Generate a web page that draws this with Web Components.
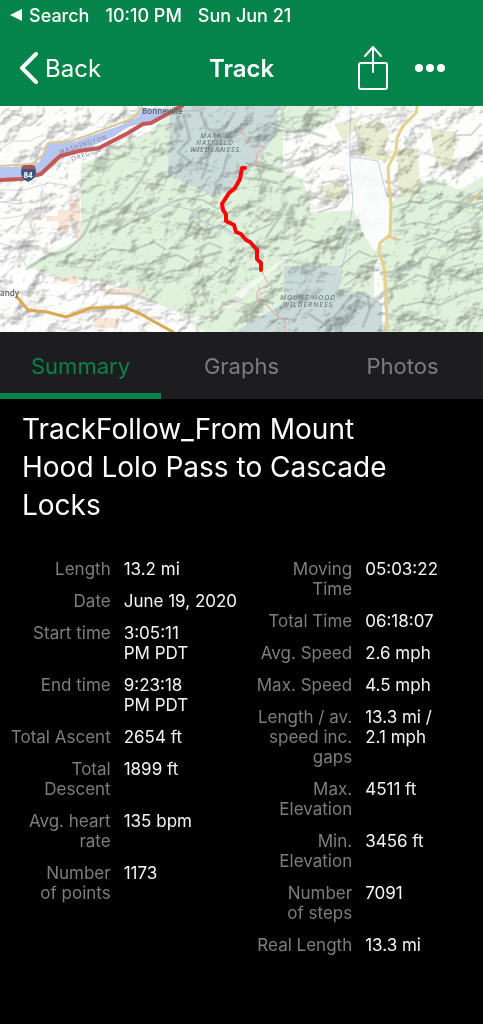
<!DOCTYPE html>
<html lang="en">
<head>
<meta charset="utf-8">
<meta name="viewport" content="width=device-width, initial-scale=1">
<title>Track</title>
<style>
  html { background: #000; }
  body { margin: 0; font-family: Inter, "Liberation Sans", sans-serif; color: #fff; --green: #04834a; }
</style>
</head>
<body>
<track-page>
  <status-bar slot="top"><a href="#search" slot="back">Search</a><span>10:10 PM</span><span>Sun Jun 21</span></status-bar>
  <nav-bar slot="top">Track</nav-bar>
  <track-map slot="top"></track-map>
  <tab-bar slot="top"></tab-bar>
  <track-title>TrackFollow_From Mount Hood Lolo Pass to Cascade Locks</track-title>
  <stat-grid>
    <stat-column>
      <stat-item label="Length">13.2 mi</stat-item>
      <stat-item label="Date">June 19, 2020</stat-item>
      <stat-item label="Start time">3:05:11 PM&nbsp;PDT</stat-item>
      <stat-item label="End time">9:23:18 PM&nbsp;PDT</stat-item>
      <stat-item label="Total Ascent">2654 ft</stat-item>
      <stat-item label="Total Descent">1899 ft</stat-item>
      <stat-item label="Avg. heart rate">135 bpm</stat-item>
      <stat-item label="Number of&nbsp;points">1173</stat-item>
    </stat-column>
    <stat-column>
      <stat-item label="Moving Time">05:03:22</stat-item>
      <stat-item label="Total Time">06:18:07</stat-item>
      <stat-item label="Avg. Speed">2.6 mph</stat-item>
      <stat-item label="Max. Speed">4.5 mph</stat-item>
      <stat-item label="Length / av. speed inc. gaps">13.3 mi / 2.1&nbsp;mph</stat-item>
      <stat-item label="Max. Elevation">4511 ft</stat-item>
      <stat-item label="Min. Elevation">3456 ft</stat-item>
      <stat-item label="Number of&nbsp;steps">7091</stat-item>
      <stat-item label="Real Length">13.3 mi</stat-item>
    </stat-column>
  </stat-grid>
</track-page>

<script>
const define = (name, html, setup) => customElements.define(name, class extends HTMLElement {
  constructor() {
    super();
    this.attachShadow({ mode: 'open' }).innerHTML = html;
  }
  connectedCallback() { if (setup) setup(this, this.shadowRoot); }
});

define('track-page', `
  <style>
    :host { display: flex; flex-direction: column; min-height: 100vh; background: #000; }
  </style>
  <header><slot name="top"></slot></header>
  <main><slot></slot></main>`);

define('status-bar', `
  <style>
    :host { display: flex; align-items: center; gap: 16px; height: 30px; padding: 0 10px; background: var(--green); font-size: 18px; font-weight: 500; white-space: nowrap; }
    .back { display: flex; align-items: center; gap: 7px; }
    ::slotted(a) { color: inherit; text-decoration: none; }
    svg { display: block; }
  </style>
  <div class="back">
    <svg width="12" height="12" viewBox="0 0 12 12" aria-hidden="true"><path d="M0 6 12 0V12Z" fill="#fff"/></svg>
    <slot name="back"></slot>
  </div>
  <slot></slot>`);

define('nav-bar', `
  <style>
    :host { display: grid; grid-template-columns: 1fr auto 1fr; align-items: center; height: 76px; padding: 0 38px 0 19px; box-sizing: border-box; background: var(--green); }
    button { display: flex; align-items: center; gap: 7px; padding: 0; border: 0; background: none; color: #fff; font: inherit; font-size: 24px; cursor: pointer; }
    h1 { margin: 0; padding-left: 19px; font-size: 24px; font-weight: 600; }
    .actions { display: flex; align-items: center; justify-content: flex-end; gap: 27px; }
    svg { display: block; fill: none; stroke: #fff; stroke-linecap: round; stroke-linejoin: round; }
  </style>
  <button type="button">
    <svg width="19" height="32" viewBox="0 0 19 32" stroke-width="4"><path d="M17 2 3 16 17 30"/></svg>Back
  </button>
  <h1><slot></slot></h1>
  <div class="actions">
    <button type="button" aria-label="Share">
      <svg width="30" height="46" viewBox="0 0 30 46" stroke-width="2"><rect x="1" y="18" width="28" height="26" rx="2"/><path d="M15 27V2M7 11 15 2 23 11"/></svg>
    </button>
    <button type="button" aria-label="More">
      <svg width="30" height="8" viewBox="0 0 30 8"><g fill="#fff" stroke="none"><circle cx="4" cy="4" r="4"/><circle cx="15" cy="4" r="4"/><circle cx="26" cy="4" r="4"/></g></svg>
    </button>
  </div>`);

define('track-map', `
  <style>
    :host { display: block; background: #f8f9f7; }
    svg { display: block; width: 100%; height: auto; }
    text { font-family: "Noto Sans", sans-serif; }
  </style>
  <svg viewBox="0 0 483 226" role="img" aria-label="Track map">
    <defs>
      <filter id="relief" x="0" y="0" width="100%" height="100%" color-interpolation-filters="sRGB">
        <feTurbulence type="fractalNoise" baseFrequency=".03 .036" numOctaves="4" seed="7" result="n"/>
        <feColorMatrix in="n" values="0 0 0 0 0  0 0 0 0 0  0 0 0 0 0  1 0 0 0 0"/>
        <feDiffuseLighting surfaceScale="11" diffuseConstant="1.3" lighting-color="#fff"><feDistantLight azimuth="225" elevation="52"/></feDiffuseLighting>
      </filter>
    </defs>
    <rect width="483" height="226" fill="#fdfdfc"/>
    <g fill="#e0f1dc">
      <path d="M81 58 100 51 120 40 150 25 178 0H270L283 18V64L300 72 310 90V105L325 106 354 104 362 125 374 140 386 138 374 160 374 226H205L178 207 144 192 120 177 60 172 25 160 45 150 81 132Z"/>
      <path d="M392 95 420 80 432 72 460 84 483 70V226H387L380 150 390 120Z"/>
      <path d="M270 0H345L322 22 300 27 265 28Z"/>
    </g>
    <g fill="#e9edd2"><path d="M358 20 378 12 390 25 384 44 394 52 380 56 358 48Z"/><path d="M398 43 418 42 420 88 405 95 397 78ZM430 22 456 26 452 66 436 58ZM334 18 362 10 345 38Z"/><path d="M320 81 343 74 346 90 330 96Z"/></g>
    <g fill="#cbdbd9"><path d="M170 5 177 0H276L279 25 260 50 237 80 214 91 200 84 182 75 168 70Z"/><path d="M284 160H340L338 184 365 188 382 197V226H235L284 197Z"/></g>
    <g fill="#f7dfcf" opacity=".75"><path d="M58 104H69V93H80V115H69V126H58V115H46V110H58ZM36 109H41V114H36ZM76 115H81V133H76ZM54 171H78V178H54ZM100 183H145V188H100ZM94 212H118V222H94Z"/></g>
    <path d="M0 155 25 165 100 185 172 204 200 210 230 202 300 140 240 185 208 215 172 218 140 200 95 198 45 187 0 172Z" fill="#fff" opacity=".6"/>
    <rect width="483" height="226" filter="url(#relief)" opacity=".34" style="mix-blend-mode:multiply"/>
    <path d="M343 52 382 54 388 100 388 130 374 145 362 125 354 90Z" fill="#fbfcfc" opacity=".9"/>
    <g fill="none" stroke="#68766e" stroke-linecap="round" stroke-linejoin="round" opacity=".26">
      <g stroke-width="3">
        <path d="M27 163 47 150 66 145 83 130 92 112 119 101 132 87 146 66"/>
        <path d="M184 10 190 33 178 46 190 56M201 8 207 22 220 30M210 40 206 62 202 72M228 48 222 70 215 78M234 7 226 21 214 28"/>
        <path d="M284 62 299 59 318 52 340 39M286 26 305 24 325 31M245 72 263 74 278 77M267 130 279 112 287 97"/>
        <path d="M310 209 324 218 337 208 351 190M242 202 260 194 273 197M363 220 370 203 368 190"/>
        <path d="M430 103 446 95 459 97 470 88M106 187 132 188 156 197M189 161 202 151 221 146"/>
      </g>
      <g stroke-width="2">
        <path d="M95 151 112 143 130 145 154 136 165 143M113 126 132 116 151 109 169 97 185 92 203 94 218 103 231 96"/>
        <path d="M62 160 80 153 94 155M130 161 151 157 177 149 189 155M150 175 170 165 187 164 203 155"/>
        <path d="M186 128 193 115 205 125 220 119 234 128M195 144 209 137 222 142M207 175 223 161 231 165"/>
        <path d="M246 57 263 61 282 66M250 28 269 17 284 21M249 128 271 118 284 99M294 139 307 134 324 138 342 131"/>
        <path d="M280 150 301 147 319 139M319 106 336 101 348 87M340 161 359 145 370 150M345 179 365 166 379 164"/>
        <path d="M400 179 418 169 434 174 452 161 473 156M410 161 428 151 443 155 463 144 482 142M398 201 420 196 440 199 463 188 482 183M414 139 433 132 447 137 463 128 480 125"/>
        <path d="M392 102 410 96 427 97 441 88M401 120 420 116 434 119 452 112 465 101 482 96M452 73 465 64 470 52 482 44M440 40 456 29 471 29 481 18"/>
        <path d="M266 222 279 212 294 214 302 202M318 224 333 212 346 215 355 204M402 216 425 211 443 216M456 219 473 208 482 209"/>
      </g>
      <path d="M8 24 20 18 31 20 42 10M0 43 13 35 29 35 45 28M66 28 80 18 93 20 106 7M0 17 13 8 23 11M0 84 24 84 49 77 67 79M2 96 19 98 36 95M0 113 20 110 32 105M22 134 34 130 43 126"/>
    </g>
    <g fill="none" stroke="#abc4df" opacity=".75"><path d="M483 110 454 121 435 138 418 160 389 168M351 0 350 30 350 59 353 96 346 145 337 184M354 51 378 55 386 88M143 110 159 101 172 99 191 104 199 114 224 124 243 137M0 137 17 143 26 160M483 82 469 89M0 96 21 94"/></g>
    <path d="M0 61 27 61 38 58 48 38 77 35 124 18 138 12 142 2 177 3 151 15 128 21 113 31 87 42 66 48 48 63 38 70 0 72Z" fill="#b7c6f1"/>
    <g fill="none" stroke-linejoin="round" stroke-linecap="round">
      <path d="M0 60 32 58 43 49 48 37 71 35 94 27 134 12 142 1" stroke="#d7c997" stroke-width="2"/>
      <path d="M-2 74 21 73 41 68 60 50 79 45 99 42 128 27 143 18 151 17 182 0" stroke="#c55855" stroke-width="4"/>
      <path d="M17 191 28 204 47 206 66 211 78 207 90 202 124 201 141 208 153 215 173 226" stroke="#d9aa53" stroke-width="3"/>
      <path d="M417 1 416 7 403 20 397 32 396 46 388 61 389 78 391 100 390 129 380 137 379 146 384 160 386 184 387 226" stroke="#e4d18c" stroke-width="3"/>
      <path d="M390 131 399 134M470 96 483 84" stroke="#e1bf91" stroke-width="2"/>
      <path d="M240 22 248 35 254 40 265 41 256 48 257 57 245 61M262 166 269 179 258 184 256 192 268 200 275 209 285 214 285 226" stroke="#eaa4a1"/>
      <path d="M245 62 242 62 240 73 235 82 229 87 222 98 223 104 226 108 226 115 234 119 236 126 241 128 246 134 250 136 257 144 257 153 261 157 261 164" stroke="#fb0509" stroke-width="4"/>
    </g>
    <g><path d="M22 60Q28 58 35 60L36 66Q36 73 28 76Q21 73 21 66Z" fill="#375682"/><path d="M22 60Q28 58 35 60V63H22Z" fill="#b25355"/><text x="28" y="72" fill="#fff" font-size="8" font-weight="700" text-anchor="middle">84</text></g>
    <g fill="#7b8289" font-size="6" letter-spacing="1"><text transform="translate(60 48) rotate(-18)">WASHINGTON</text><text transform="translate(72 55) rotate(-18)">OREGON</text></g>
    <g fill="#66696a" font-size="8" font-weight="600"><text x="142" y="8">Bonneville</text><text x="0" y="190">andy</text></g>
    <g fill="#71817f" font-size="7" font-style="italic" font-weight="500" letter-spacing="1" text-anchor="middle"><text x="217" y="32">MARK O.</text><text x="215" y="39">HATFIELD</text><text x="215" y="46">WILDERNESS</text><text x="308" y="194">MOUNT HOOD</text><text x="308" y="201">WILDERNESS</text></g>
  </svg>`);

define('tab-bar', `
  <style>
    :host { display: block; background: #1d1d1f; }
    div { display: grid; grid-template-columns: repeat(3, 1fr); }
    button { height: 67px; padding: 6px 0 0; border: 0; border-bottom: 6px solid transparent; background: none; color: #7d7d80; font: inherit; font-size: 22px; cursor: pointer; }
    button[aria-selected="true"] { color: var(--green); border-color: var(--green); }
  </style>
  <div role="tablist">
    <button type="button" role="tab" aria-selected="true">Summary</button>
    <button type="button" role="tab" aria-selected="false">Graphs</button>
    <button type="button" role="tab" aria-selected="false">Photos</button>
  </div>`, (host, root) => {
  const tabs = root.querySelectorAll('button');
  tabs.forEach(tab => tab.onclick = () => tabs.forEach(t => t.setAttribute('aria-selected', t === tab)));
});

define('track-title', `
  <style>
    :host { display: block; padding: 11px 80px 0 22px; }
    h2 { margin: 0; font-size: 28px; line-height: 38px; font-weight: 400; }
  </style>
  <h2><slot></slot></h2>`);

define('stat-grid', `
  <style>
    :host { display: grid; grid-template-columns: 1fr 1fr; padding: 35px 0; }
  </style>
  <slot></slot>`);

define('stat-column', `
  <style>
    :host { display: flex; flex-direction: column; gap: 12px; }
  </style>
  <slot></slot>`);

define('stat-item', `
  <style>
    :host { display: block; font-size: 17px; line-height: 20px; }
    dl { display: grid; grid-template-columns: 11fr 13fr; margin: 0; }
    dt { padding-left: 9px; color: #7d7d80; text-align: right; }
    dd { margin: 0; padding-left: 13px; color: #f4f4f4; }
  </style>
  <dl><dt></dt><dd><slot></slot></dd></dl>`, (host, root) => {
  root.querySelector('dt').textContent = host.getAttribute('label');
});
</script>
</body>
</html>
